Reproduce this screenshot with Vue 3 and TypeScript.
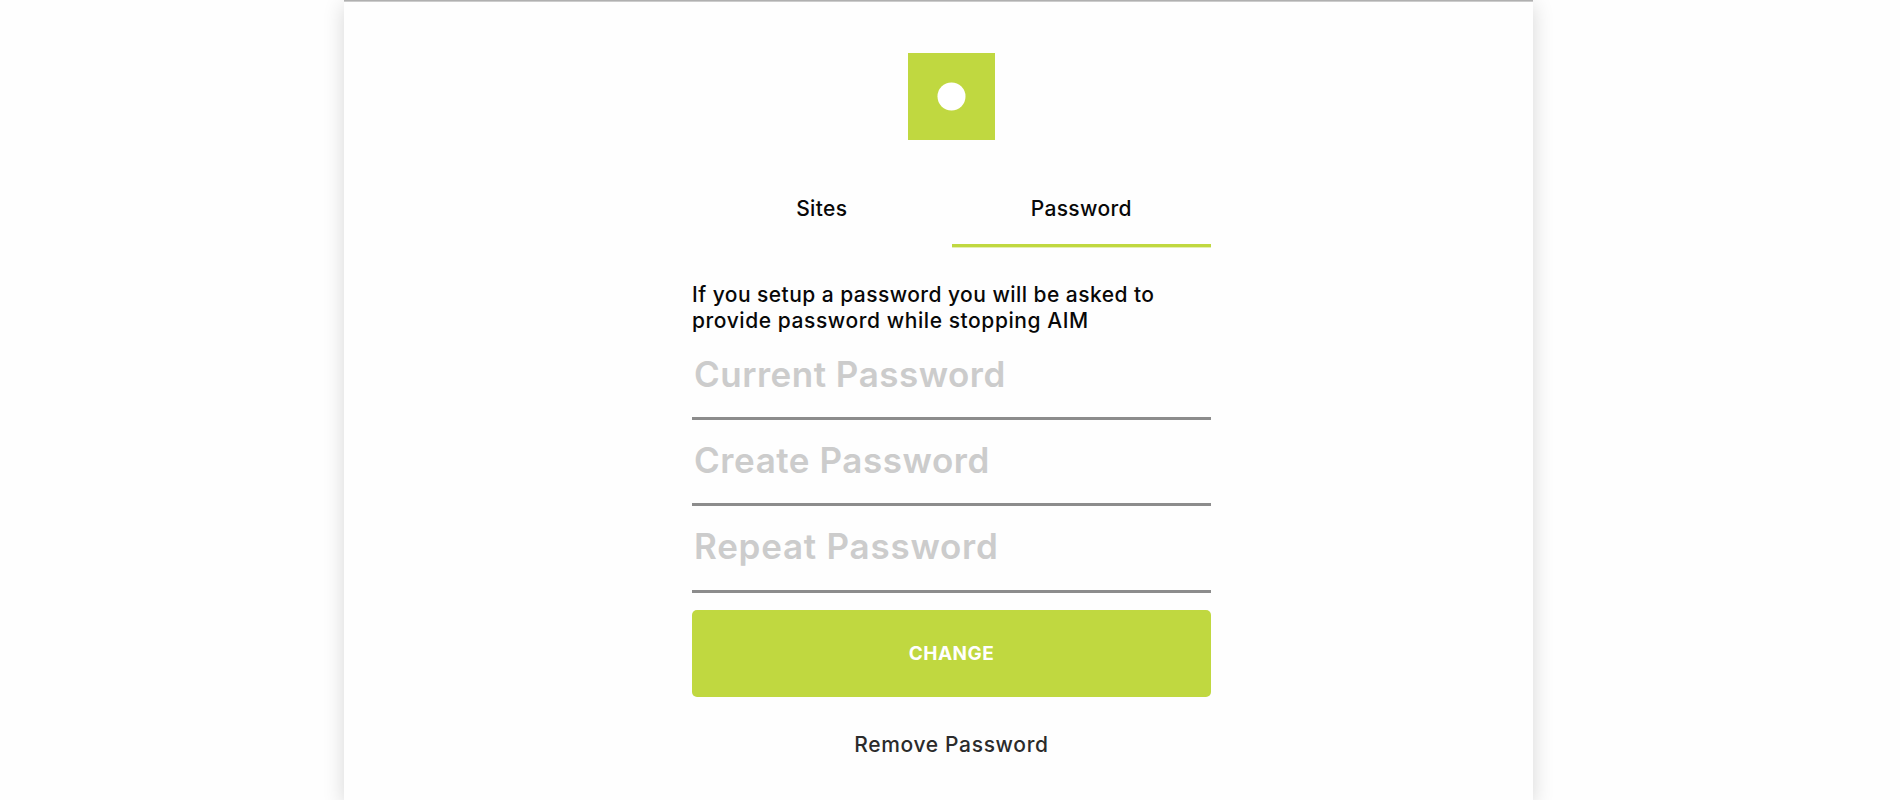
<template>
  <div class="page">
    <main class="panel">
      <svg class="logo" viewBox="0 0 87 87" aria-hidden="true">
        <rect width="87" height="87" fill="#c0d840" />
        <circle cx="43.5" cy="43.5" r="14" fill="#ffffff" />
      </svg>

      <nav class="tabs">
        <button
          v-for="tab in tabs"
          :key="tab.id"
          type="button"
          class="tab"
          :class="{ active: activeTab === tab.id }"
          @click="activeTab = tab.id"
        >
          {{ tab.label }}
        </button>
      </nav>

      <form class="form" @submit.prevent>
        <p class="hint">
          <span class="hint-first">If you setup a password you will be asked to</span><br />
          <span class="hint-second">provide password while stopping AIM</span>
        </p>

        <input
          v-for="field in fields"
          :key="field.id"
          v-model="field.value"
          type="password"
          class="field"
          :class="field.id"
          :placeholder="field.label"
        />

        <button type="submit" class="submit">CHANGE</button>
        <button type="button" class="remove" @click="clearFields">Remove Password</button>
      </form>
    </main>
  </div>
</template>

<script setup lang="ts">
import { ref } from 'vue';

type TabId = 'sites' | 'password';

interface Tab {
  id: TabId;
  label: string;
}

interface Field {
  id: string;
  label: string;
  value: string;
}

const tabs: Tab[] = [
  { id: 'sites', label: 'Sites' },
  { id: 'password', label: 'Password' },
];

const activeTab = ref<TabId>('password');

const fields = ref<Field[]>([
  { id: 'current', label: 'Current Password', value: '' },
  { id: 'create', label: 'Create Password', value: '' },
  { id: 'repeat', label: 'Repeat Password', value: '' },
]);

const clearFields = () => {
  fields.value.forEach((field) => {
    field.value = '';
  });
};
</script>

<style>
body {
  margin: 0;
  background: #fefefe;
}
</style>

<style scoped>
.page {
  height: 800px;
  padding: 0 367px 0 344px;
  box-sizing: border-box;
  overflow: hidden;
  font-family: Inter, "Liberation Sans", sans-serif;
}

.panel {
  display: flex;
  flex-direction: column;
  align-items: center;
  height: 800px;
  padding: 52px 0 0 26px;
  box-sizing: border-box;
  border-top: 1px solid #b0b0b0;
  background: #fefefe;
  box-shadow: 0 5px 20px rgba(0, 0, 0, 0.16), inset 0 1px 0 #cccccc;
}

.logo {
  display: block;
  width: 87px;
  height: 87px;
}

button {
  border: none;
  background: none;
  padding: 0;
  font-family: inherit;
  cursor: pointer;
}

/* Tabs */
.tabs {
  display: flex;
  width: 519px;
  height: 107px;
}

.tab {
  flex: 1;
  box-sizing: border-box;
  padding-top: 33px;
  border-bottom: 3px solid transparent;
  font-size: 21px;
  line-height: 26px;
  font-weight: 500;
  letter-spacing: 0.35px;
  color: #080808;
}
.tab.active {
  border-bottom-color: #c0d840;
  box-shadow: 0 1px 0 rgba(192, 216, 64, 0.4);
}

.form {
  display: flex;
  flex-direction: column;
  width: 519px;
}

.hint {
  margin: 35px 0 0;
  font-size: 21px;
  line-height: 26px;
  font-weight: 500;
  color: #080808;
  white-space: nowrap;
}
.hint-first { letter-spacing: 0.45px; }
.hint-second { letter-spacing: 0.57px; }

/* Password fields */
.field {
  width: 100%;
  height: 86px;
  box-sizing: border-box;
  padding: 0 2px 4px;
  border: none;
  border-bottom: 3px solid #8c8c8c;
  border-radius: 0;
  outline: none;
  background: transparent;
  font-family: inherit;
  font-size: 35px;
  font-weight: 600;
  letter-spacing: 0.5px;
  color: #444444;
}
.field::placeholder { color: #cccccc; opacity: 1; }
.field.create { letter-spacing: 0.56px; }
.field.repeat { height: 87px; padding-bottom: 4px; letter-spacing: 0.76px; }

.submit {
  height: 87px;
  margin-top: 17px;
  border-radius: 5px;
  background: #c0d840;
  font-size: 19px;
  font-weight: 700;
  letter-spacing: 0.5px;
  color: #ffffff;
}

.remove {
  align-self: center;
  margin-top: 35px;
  font-size: 21px;
  line-height: 26px;
  font-weight: 500;
  letter-spacing: 0.65px;
  color: #2b2b2b;
}
</style>
